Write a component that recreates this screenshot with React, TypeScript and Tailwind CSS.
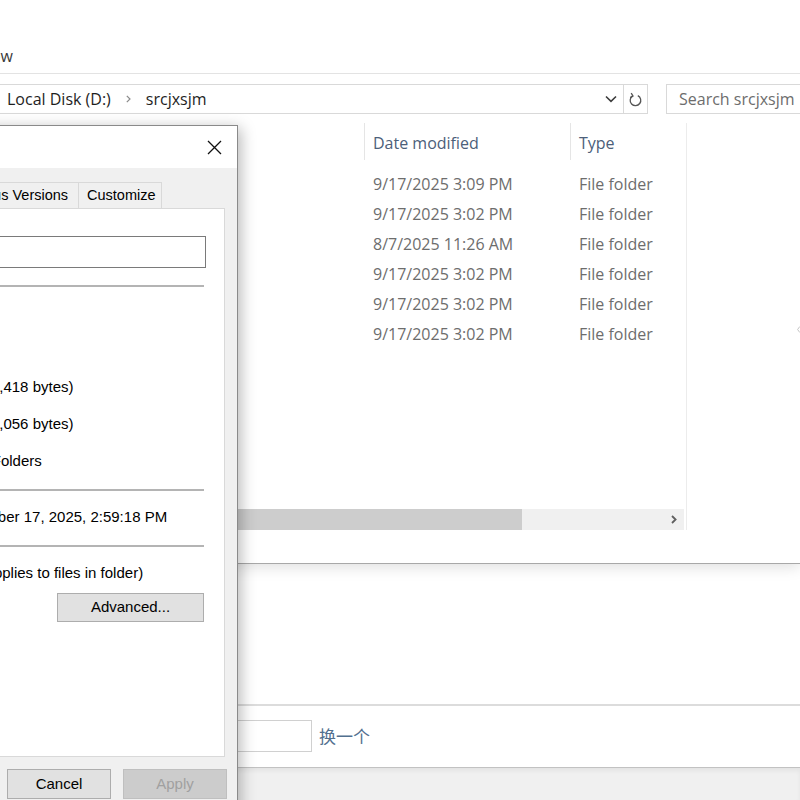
import React from "react";

const rows: [string, string][] = [
  ["9/17/2025 3:09 PM", "File folder"],
  ["9/17/2025 3:02 PM", "File folder"],
  ["8/7/2025 11:26 AM", "File folder"],
  ["9/17/2025 3:02 PM", "File folder"],
  ["9/17/2025 3:02 PM", "File folder"],
  ["9/17/2025 3:02 PM", "File folder"],
];

function Checkbox() {
  return <span className="inline-block w-[13px] h-[13px] border border-[#333] bg-white shrink-0" />;
}

function InfoRow({ label, value }: { label: string; value: string }) {
  return (
    <div className="h-[37px] flex items-center whitespace-nowrap">
      <div className="w-[100px] shrink-0">{label}</div>
      <div>{value}</div>
    </div>
  );
}

function Sep() {
  return <div className="h-[2px] mr-[2px] bg-[#b4b4b4]" />;
}

function PropertiesDialog() {
  return (
    <div className="absolute left-[-264px] top-[125px] z-20 w-[502px] h-[700px] border border-[#8a8a8a] bg-[#f0f0f0] shadow-[3px_3px_14px_rgba(0,0,0,0.28)] flex flex-col font-['Liberation_Sans',Arial,sans-serif] text-[15px] text-black">
      {/* title bar */}
      <div className="h-[42px] bg-white flex items-center shrink-0">
        <div className="ml-[10px] w-[18px] h-[14px] bg-[#f3c64e] rounded-[1px]" />
        <span className="ml-[8px]">srcjxsjm Properties</span>
        <div className="ml-auto w-[46px] h-full flex items-center justify-center">
          <svg width="15" height="15" viewBox="0 0 15 15">
            <path d="M1 1 L14 14 M14 1 L1 14" stroke="#111" strokeWidth="1.3" fill="none" />
          </svg>
        </div>
      </div>
      {/* tabs */}
      <div className="pt-[14px] shrink-0">
        <div className="ml-[11px] h-[26px] flex items-end text-[14.5px]">
          <div className="w-[66px] h-[28px] -mb-[1px] relative z-10 bg-white border border-b-0 border-[#d9d9d9] flex items-center pl-[8px]">General</div>
          <div className="w-[64px] h-[26px] border-t border-r border-[#d9d9d9] flex items-center pl-[8px]">Sharing</div>
          <div className="w-[66px] h-[26px] border-t border-r border-[#d9d9d9] flex items-center pl-[8px]">Security</div>
          <div className="w-[135px] h-[26px] border-t border-r border-[#d9d9d9] flex items-center pl-[8px] whitespace-nowrap">Previous Versions</div>
          <div className="w-[83px] h-[26px] border-t border-r border-[#d9d9d9] flex items-center pl-[8px]">Customize</div>
        </div>
      </div>
      {/* panel */}
      <div className="ml-[9px] mr-[12px] h-[549px] shrink-0 bg-white border border-[#d9d9d9] flex flex-col pl-[13px] pr-[18px]">
        <div className="mt-[27px] h-[32px] flex">
          <div className="w-[100px] shrink-0 flex items-center">
            <div className="w-[32px] h-[26px] bg-[#f3c64e] rounded-[2px]" />
          </div>
          <div className="flex-1 border border-[#7a7a7a] flex items-center pl-[4px]">srcjxsjm</div>
        </div>
        <div className="mt-[17px]">
          <Sep />
        </div>
        <div className="mt-[8px]">
          <InfoRow label="Type:" value="File folder" />
          <InfoRow label="Location:" value="D:\" />
          <InfoRow label="Size:" value="12.3 GB (13,242,815,418 bytes)" />
          <InfoRow label="Size on disk:" value="12.3 GB (13,253,648,056 bytes)" />
          <InfoRow label="Contains:" value="12,345 Files, 6,789 Folders" />
        </div>
        <div className="mt-[9px]">
          <Sep />
        </div>
        <div className="mt-[8px]">
          <InfoRow label="Created:" value="Wednesday, September 17, 2025, 2:59:18 PM" />
        </div>
        <div className="mt-[9px]">
          <Sep />
        </div>
        <div className="mt-[8px] h-[37px] flex items-center whitespace-nowrap">
          <div className="w-[100px] shrink-0">Attributes:</div>
          <div className="-ml-[4px] flex items-center gap-[4px]">
            <Checkbox />
            <span>Read-only (Only applies to files in folder)</span>
          </div>
        </div>
        <div className="mt-[1px] h-[29px] flex items-center whitespace-nowrap">
          <div className="w-[100px] shrink-0" />
          <div className="-ml-[4px] flex items-center gap-[4px]">
            <Checkbox />
            <span>Hidden</span>
          </div>
          <div className="ml-auto mr-[2px] w-[147px] h-[29px] bg-[#e1e1e1] border border-[#adadad] flex items-center justify-center">
            Advanced...
          </div>
        </div>
      </div>
      {/* buttons */}
      <div className="mt-[12px] flex justify-end gap-[12px] pr-[10px]">
        <div className="w-[104px] h-[30px] bg-[#e1e1e1] border border-[#adadad] flex items-center justify-center">OK</div>
        <div className="w-[104px] h-[30px] bg-[#e1e1e1] border border-[#adadad] flex items-center justify-center">Cancel</div>
        <div className="w-[104px] h-[30px] bg-[#cccccc] border border-[#bfbfbf] text-[#a0a0a0] flex items-center justify-center">Apply</div>
      </div>
    </div>
  );
}

export default function App() {
  return (
    <div className="relative w-[800px] h-[800px] overflow-hidden bg-white font-['Open_Sans','Noto_Sans',sans-serif]">
      {/* Explorer window */}
      <div className="relative z-10 h-[564px] bg-white border-b border-[#a8a8a8] shadow-[0_3px_14px_rgba(0,0,0,0.13)] flex flex-col">
        <div className="h-[74px] shrink-0 border-b border-[#e3e3e3] pt-[45px]">
          <span className="block -ml-[22px] text-[16px] leading-[22px] text-[#3a3a3a]">View</span>
        </div>
        {/* address row */}
        <div className="h-[40px] shrink-0 pt-[10px] flex">
          <div className="-ml-[2px] w-[626px] shrink-0 h-[30px] border border-[#d9d9d9] flex items-center pl-[8px] text-[16px] text-[#1e1e1e] whitespace-nowrap">
            <span>Local Disk (D:)</span>
            <svg className="mx-[15px]" width="5" height="8" viewBox="0 0 5 8">
              <path d="M0.8 0.8 L4 4 L0.8 7.2" stroke="#8a8a8a" strokeWidth="1.2" fill="none" />
            </svg>
            <span>srcjxsjm</span>
            <svg className="ml-auto mr-[6px]" width="12" height="8" viewBox="0 0 12 8">
              <path d="M1 1.5 L6 6.3 L11 1.5" stroke="#3c3c3c" strokeWidth="1.6" fill="none" />
            </svg>
          </div>
          <div className="w-[24px] shrink-0 h-[30px] border border-l-0 border-[#d9d9d9] flex items-center justify-center">
            <svg width="15" height="17" viewBox="0 0 15 17">
              <path d="M9.8 4.6 A5.3 5.3 0 1 1 4.6 4.9" stroke="#555" strokeWidth="1.3" fill="none" />
              <path d="M3.2 2.2 L5 5 L2.2 6.6" stroke="#555" strokeWidth="1.3" fill="none" />
            </svg>
          </div>
          <div className="ml-[18px] w-[200px] shrink-0 h-[30px] border border-[#d9d9d9] flex items-center pl-[12px] text-[16px] text-[#6d6d6d] whitespace-nowrap">
            Search srcjxsjm
          </div>
        </div>
        {/* main area */}
        <div className="mt-[9px] h-[407px] shrink-0 flex">
          <div className="w-[686px] shrink-0 h-full flex flex-col">
            <div className="h-[37px] shrink-0 flex text-[16px] text-[#4c607a]">
              <div className="w-[364px] shrink-0" />
              <div className="w-[206px] shrink-0 border-l border-[#e5e5e5] pl-[8px] flex items-center pt-[2px]">Date modified</div>
              <div className="w-[116px] shrink-0 border-l border-[#e5e5e5] pl-[8px] flex items-center pt-[2px]">Type</div>
            </div>
            <div className="mt-[9px] text-[16px] text-[#6d6d6d]">
              {rows.map(([d, t], i) => (
                <div key={i} className="h-[30px] flex items-center whitespace-nowrap">
                  <div className="w-[373px] shrink-0" />
                  <div className="w-[206px] shrink-0">{d}</div>
                  <div>{t}</div>
                </div>
              ))}
            </div>
            <div className="mt-auto h-[21px] w-[684px] flex bg-[#f0f0f0]">
              <div className="w-[522px] h-full bg-[#cdcdcd]" />
              <div className="flex-1" />
              <div className="w-[21px] h-full flex items-center justify-center">
                <svg width="6" height="9" viewBox="0 0 6 9">
                  <path d="M1 1 L4.6 4.5 L1 8" stroke="#5f5f5f" strokeWidth="1.8" fill="none" />
                </svg>
              </div>
            </div>
          </div>
          <div className="flex-1 border-l border-[#ececec] pt-[203px] pl-[110px]">
            <svg width="3" height="7" viewBox="0 0 3 7">
              <path d="M2.8 0.5 L0.6 3.5 L2.8 6.5" stroke="#c4c4c4" strokeWidth="1" fill="none" />
            </svg>
          </div>
        </div>
        <div className="flex-1" />
      </div>
      {/* page behind */}
      <div className="h-[236px] flex flex-col">
        <div className="h-[142px] shrink-0 border-b-2 border-[#dcdcdc]" />
        <div className="h-[61px] shrink-0 pt-[14px] flex">
          <div className="ml-[150px] w-[162px] h-[32px] border border-[#d0d0d0]" />
          <span className="ml-[7px] leading-[32px] text-[17px] text-[#52708f] font-['Noto_Sans_CJK_SC',sans-serif]">换一个</span>
        </div>
        <div className="flex-1 border-t border-[#c2c2c2] bg-[#f0f0f0] shadow-[inset_0_3px_4px_rgba(0,0,0,0.05)]" />
      </div>
      <PropertiesDialog />
    </div>
  );
}
